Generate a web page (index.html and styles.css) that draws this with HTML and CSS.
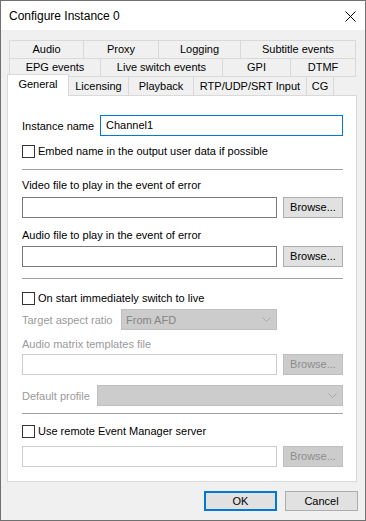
FILE: index.html
```html
<!DOCTYPE html>
<html lang="en">

<head>
    <meta charset="UTF-8">
    <title>Configure Instance 0</title>
    <link rel="stylesheet" href="styles.css">
</head>

<body>
    <div class="dialog">
        <div class="titlebar">
            <span class="title_text">Configure Instance 0</span>
            <svg class="close_icon" width="11" height="11" viewBox="0 0 11 11">
                <path d="M0.5 0.5 L10.5 10.5 M10.5 0.5 L0.5 10.5" stroke="#000" stroke-width="1" fill="none" />
            </svg>
        </div>
        <div class="dialog_body">
            <div class="tabs">
                <div class="tab_row row_one">
                    <div class="tab">Audio</div>
                    <div class="tab">Proxy</div>
                    <div class="tab">Logging</div>
                    <div class="tab">Subtitle events</div>
                </div>
                <div class="tab_row row_two">
                    <div class="tab">EPG events</div>
                    <div class="tab">Live switch events</div>
                    <div class="tab">GPI</div>
                    <div class="tab">DTMF</div>
                </div>
                <div class="tab_row row_three">
                    <div class="tab tab_selected">General</div>
                    <div class="tab">Licensing</div>
                    <div class="tab">Playback</div>
                    <div class="tab">RTP/UDP/SRT Input</div>
                    <div class="tab">CG</div>
                </div>
            </div>

            <div class="panel">
                <div class="field_row instance_row">
                    <span class="label instance_label">Instance name</span>
                    <div class="edit edit_focus">Channel1</div>
                </div>
                <div class="check_row gap_7">
                    <span class="checkbox"></span>
                    <span>Embed name in the output user data if possible</span>
                </div>
                <div class="separator gap_10"></div>

                <div class="label_line gap_7">Video file to play in the event of error</div>
                <div class="field_row gap_4">
                    <div class="edit"></div>
                    <div class="browse_btn">Browse...</div>
                </div>
                <div class="label_line gap_9">Audio file to play in the event of error</div>
                <div class="field_row gap_3">
                    <div class="edit"></div>
                    <div class="browse_btn">Browse...</div>
                </div>
                <div class="separator gap_11"></div>

                <div class="check_row gap_11">
                    <span class="checkbox"></span>
                    <span>On start immediately switch to live</span>
                </div>
                <div class="field_row gap_3">
                    <span class="label disabled_text aspect_label">Target aspect ratio</span>
                    <div class="combo combo_aspect">
                        <span>From AFD</span>
                        <svg class="chevron" width="9" height="5" viewBox="0 0 9 5">
                            <path d="M0.5 0.5 L4.5 4.5 L8.5 0.5" stroke="#a9a9a9" stroke-width="1" fill="none" />
                        </svg>
                    </div>
                </div>
                <div class="label_line disabled_text gap_6">Audio matrix templates file</div>
                <div class="field_row gap_2">
                    <div class="edit edit_disabled"></div>
                    <div class="browse_btn browse_disabled">Browse...</div>
                </div>
                <div class="field_row gap_10">
                    <span class="label disabled_text profile_label">Default profile</span>
                    <div class="combo combo_profile">
                        <span></span>
                        <svg class="chevron" width="9" height="5" viewBox="0 0 9 5">
                            <path d="M0.5 0.5 L4.5 4.5 L8.5 0.5" stroke="#a9a9a9" stroke-width="1" fill="none" />
                        </svg>
                    </div>
                </div>
                <div class="separator gap_7"></div>

                <div class="check_row gap_9">
                    <span class="checkbox"></span>
                    <span>Use remote Event Manager server</span>
                </div>
                <div class="field_row gap_7">
                    <div class="edit edit_disabled"></div>
                    <div class="browse_btn browse_disabled">Browse...</div>
                </div>
            </div>

            <div class="dialog_buttons">
                <div class="push_btn push_default">OK</div>
                <div class="push_btn">Cancel</div>
            </div>
        </div>
    </div>
</body>

</html>
```

FILE: styles.css
```css
body {
    margin: 0px;
    background-color: white;
    font-family: "Liberation Sans", Arial, sans-serif;
    font-size: 11px;
    color: black;
}

.dialog {
    width: 366px;
    height: 521px;
    box-sizing: border-box;
    border: 1px solid #707070;
    display: flex;
    flex-direction: column;
}

.titlebar {
    height: 29px;
    background-color: white;
    display: flex;
    align-items: center;
    justify-content: space-between;
    padding-left: 8px;
    padding-right: 9px;
}

.title_text {
    font-size: 12px;
}

.close_icon {
    display: block;
    margin-top: 1px;
}

.dialog_body {
    flex: 1;
    background-color: #f0f0f0;
    padding-left: 6px;
    padding-top: 10px;
}

/* tabs */
.tabs {
    margin-left: 2px;
}

.tab_row {
    display: flex;
}

.tab {
    box-sizing: border-box;
    height: 18px;
    line-height: 17px;
    text-align: center;
    border-top: 1px solid #d9d9d9;
    border-right: 1px solid #d9d9d9;
    background-color: #f0f0f0;
    white-space: nowrap;
}

.tab:first-child {
    border-left: 1px solid #d9d9d9;
}

.row_one .tab:nth-child(1) { width: 75px; }
.row_one .tab:nth-child(2) { width: 75px; }
.row_one .tab:nth-child(3) { width: 82px; }
.row_one .tab:nth-child(4) { width: 115px; }

.row_two {
    width: 347px;
    border-bottom: 1px solid #d9d9d9;
}

.row_two .tab:nth-child(1) { width: 92px; }
.row_two .tab:nth-child(2) { width: 122px; }
.row_two .tab:nth-child(3) { width: 68px; }
.row_two .tab:nth-child(4) { width: 65px; }

.row_three {
    align-items: flex-start;
}

.row_three .tab {
    border-top: none;
    line-height: 19px;
}

.row_three .tab:nth-child(2) { width: 60px; }
.row_three .tab:nth-child(3) { width: 65px; }
.row_three .tab:nth-child(4) { width: 113px; }
.row_three .tab:nth-child(5) { width: 27px; }

.row_three .tab_selected {
    width: 62px;
    height: 22px;
    margin: -3px 0px -1px -2px;
    border-top: 1px solid #d9d9d9;
    background-color: white;
    line-height: 18px;
    z-index: 1;
}

/* page */
.panel {
    width: 350px;
    box-sizing: border-box;
    background-color: white;
    border: 1px solid #d9d9d9;
    padding: 19px 13px 14px 14px;
    display: flex;
    flex-direction: column;
}

.field_row {
    display: flex;
    align-items: center;
    height: 21px;
}

.label {
    flex: none;
    white-space: nowrap;
}

.instance_label { width: 78px; }
.aspect_label { width: 99px; }
.profile_label { width: 75px; }

.label_line {
    height: 16px;
    line-height: 16px;
}

.disabled_text {
    color: #9a9a9a;
}

.edit {
    flex: 1;
    height: 21px;
    box-sizing: border-box;
    border: 1px solid #7a7a7a;
    background-color: white;
    padding-left: 5px;
    line-height: 19px;
}

.edit_focus {
    border-color: #0078d7;
}

.edit_disabled {
    border-color: #cccccc;
}

.browse_btn {
    width: 60px;
    height: 21px;
    box-sizing: border-box;
    margin-left: 6px;
    border: 1px solid #adadad;
    background-color: #e1e1e1;
    text-align: center;
    line-height: 19px;
}

.browse_disabled {
    border-color: #bfbfbf;
    background-color: #cccccc;
    color: #8d8d8d;
}

.combo {
    height: 21px;
    box-sizing: border-box;
    border: 1px solid #bfbfbf;
    background-color: #cccccc;
    color: #858585;
    display: flex;
    align-items: center;
    justify-content: space-between;
    padding-left: 4px;
    padding-right: 5px;
}

.combo_aspect {
    width: 156px;
}

.combo_profile {
    flex: 1;
}

.chevron {
    display: block;
}

.check_row {
    display: flex;
    align-items: center;
    height: 16px;
}

.checkbox {
    width: 13px;
    height: 13px;
    box-sizing: border-box;
    border: 1px solid #333333;
    background-color: white;
    margin-right: 3px;
    flex: none;
}

.separator {
    height: 1px;
    background-color: #a0a0a0;
}

.gap_2 { margin-top: 2px; }
.gap_3 { margin-top: 3px; }
.gap_4 { margin-top: 4px; }
.gap_6 { margin-top: 6px; }
.gap_7 { margin-top: 7px; }
.gap_9 { margin-top: 9px; }
.gap_10 { margin-top: 10px; }
.gap_11 { margin-top: 11px; }

/* OK / Cancel */
.dialog_buttons {
    display: flex;
    justify-content: flex-end;
    gap: 8px;
    margin-top: 9px;
    padding-right: 7px;
}

.push_btn {
    width: 73px;
    height: 20px;
    box-sizing: border-box;
    border: 1px solid #adadad;
    background-color: #e1e1e1;
    text-align: center;
    line-height: 18px;
}

.push_default {
    border: 2px solid #0078d7;
    line-height: 16px;
}
```
